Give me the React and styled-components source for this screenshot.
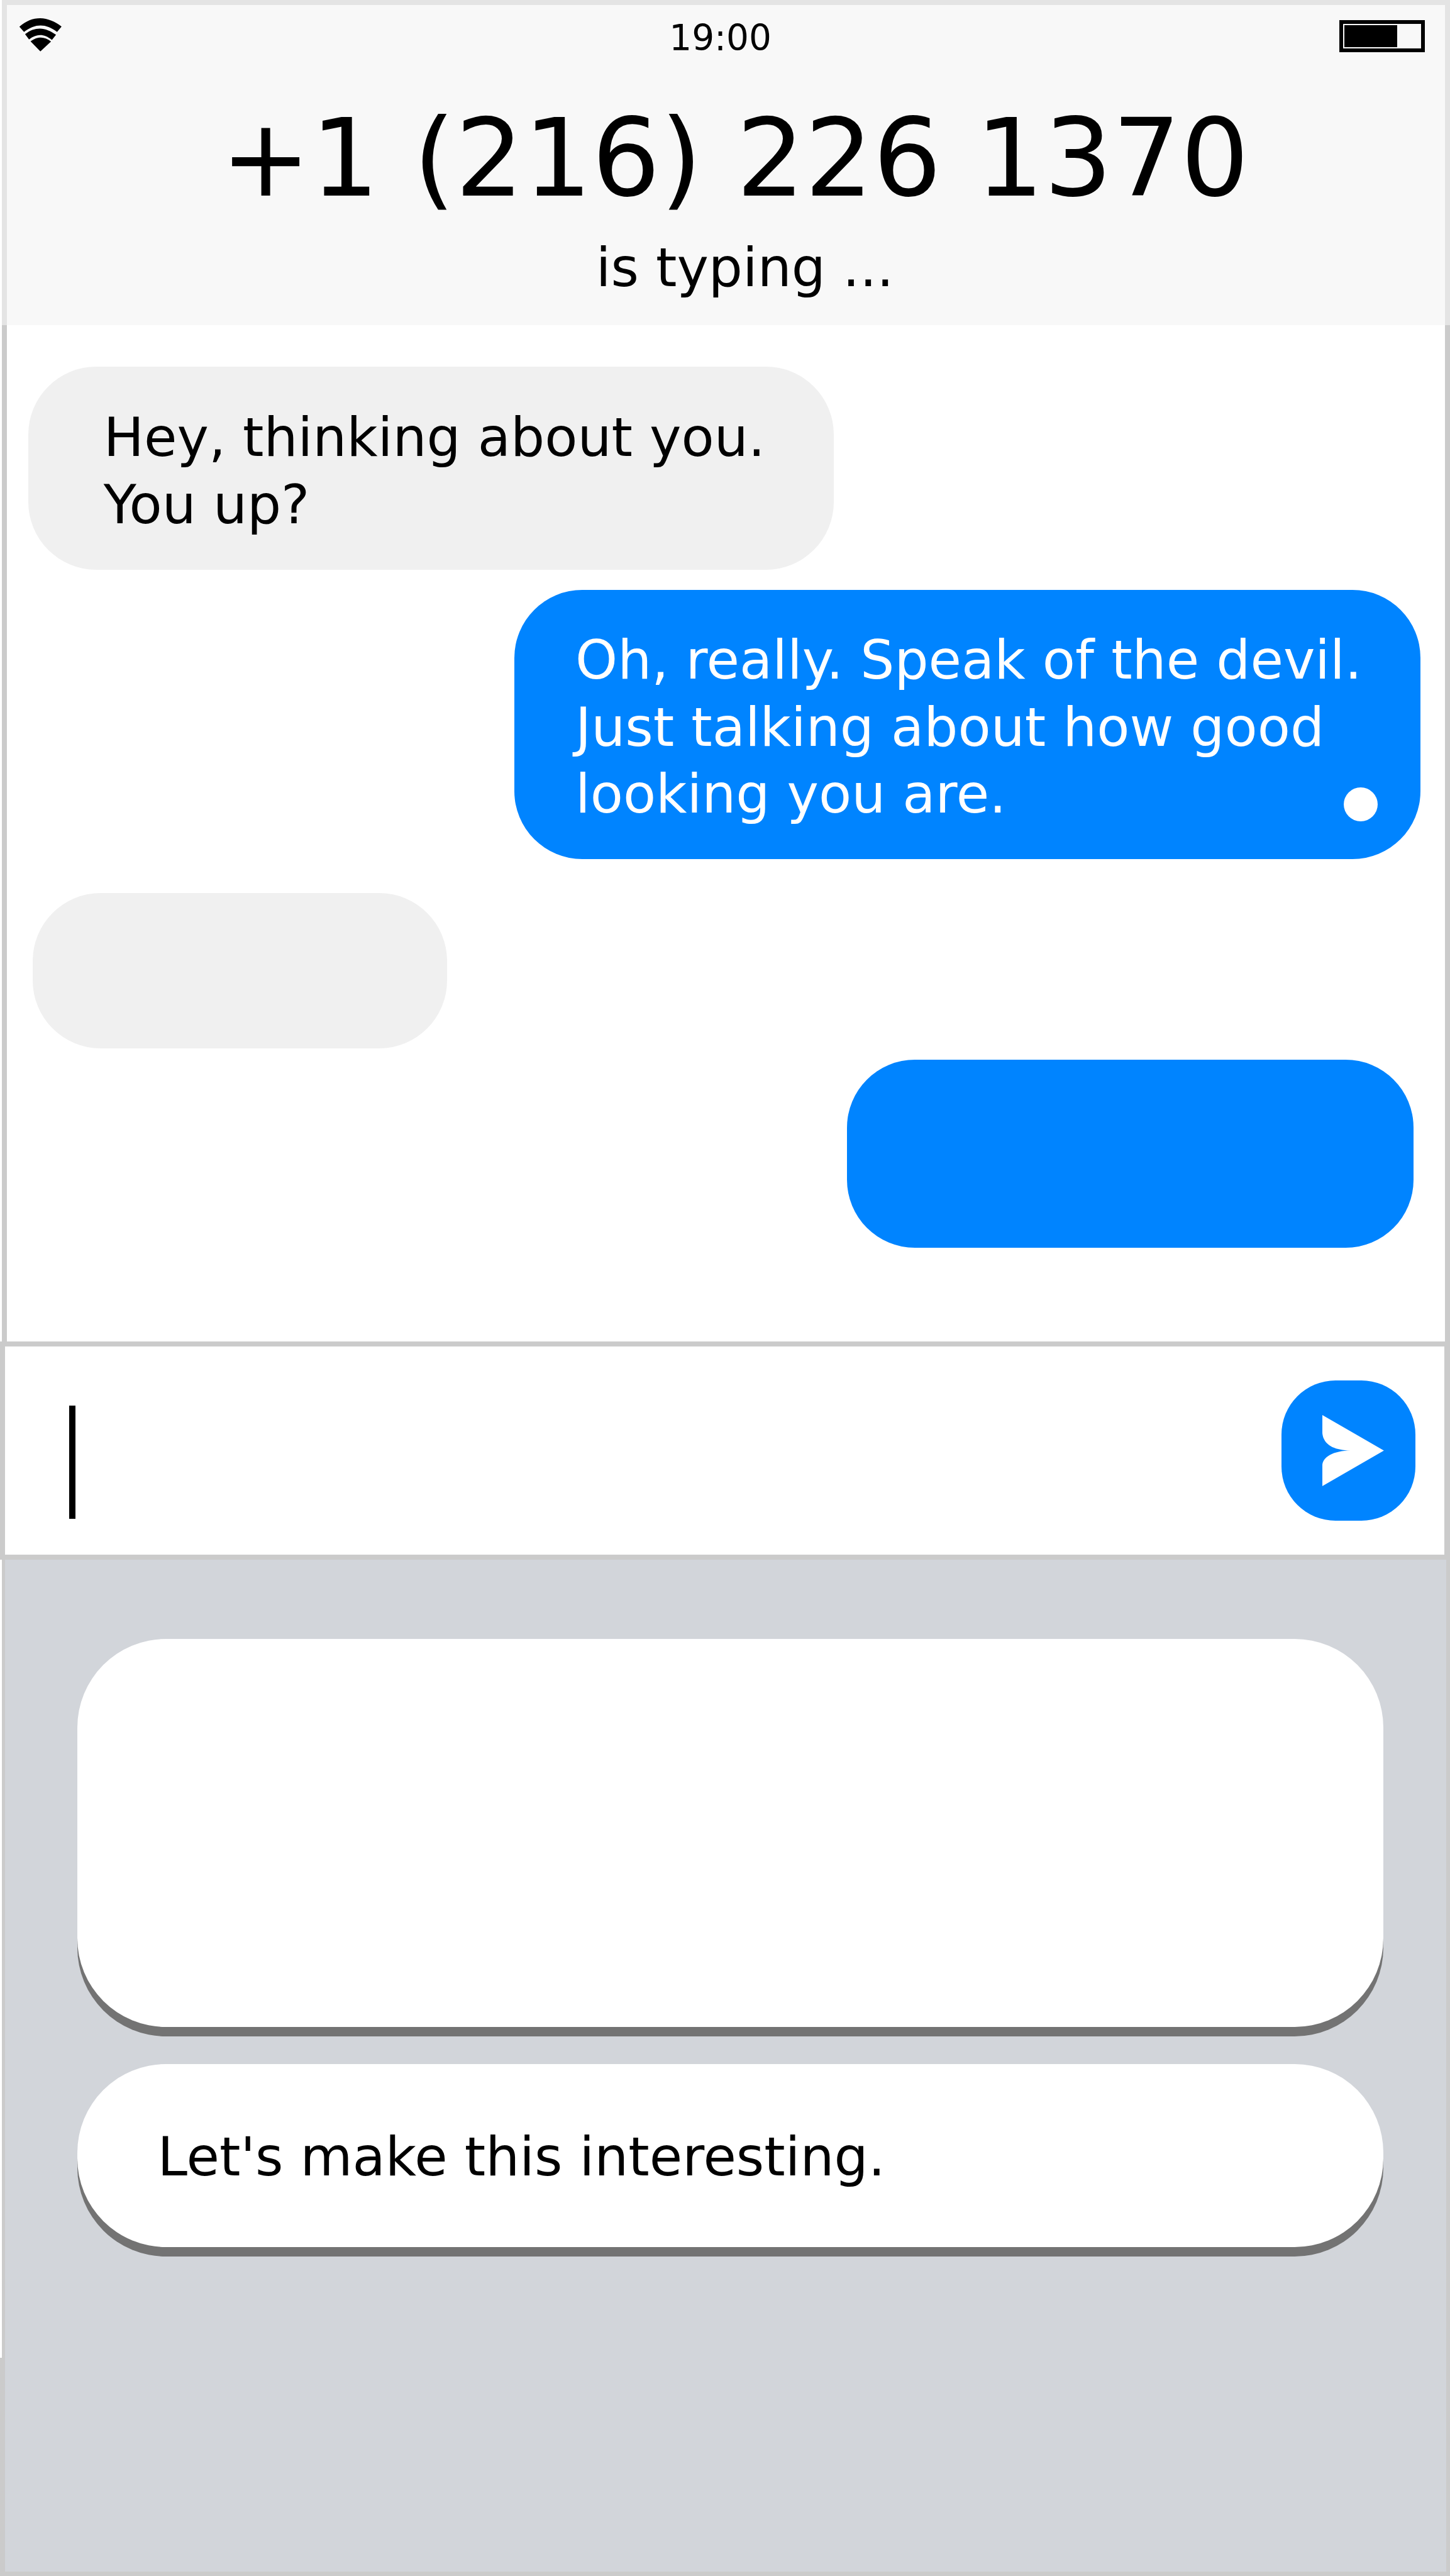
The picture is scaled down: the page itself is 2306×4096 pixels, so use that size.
import React from "react";
import styled, { createGlobalStyle } from "styled-components";

const GlobalStyle = createGlobalStyle`
  * { box-sizing: border-box; }
  html, body { margin: 0; padding: 0; background: #fff; }
  body { font-family: "DejaVu Sans", Verdana, sans-serif; color: #000; overflow: hidden; }
`;

const Screen = styled.main`
  width: 2306px;
  height: 4096px;
  display: flex;
  flex-direction: column;
  background: #fff;
  overflow: hidden;
  font-size: 85.3px;
  line-height: 106.65px;
  white-space: pre;
`;

const Header = styled.header`
  height: 517px;
  margin-left: 3px;
  border: solid #e4e4e4;
  border-width: 8px 8px 0 8px;
  background: #f8f8f8;
  display: flex;
  flex-direction: column;
`;

const StatusBar = styled.div`
  height: 112px;
  padding: 20px 32px 0 19px;
  display: grid;
  grid-template-columns: 1fr auto 1fr;
  align-items: start;
`;

const WifiIcon = styled.svg`
  display: block;
  width: 69px;
  height: 54px;
`;

const Clock = styled.time`
  font-size: 56.5px;
  line-height: 65px;
  margin-left: -4.8px;
`;

const Battery = styled.div`
  justify-self: end;
  width: 136px;
  height: 51px;
  margin-top: 4px;
  border: 6px solid #000;
  padding: 2px;
`;

const Charge = styled.div`
  width: 84px;
  height: 100%;
  background: #000;
`;

const Contact = styled.h1`
  margin: 32px 0 0 340px;
  font-size: 170.9px;
  font-weight: 400;
  line-height: 200px;
`;

const Typing = styled.p`
  margin: 20.8px 0 0 936.7px;
`;

const Conversation = styled.section`
  height: 1616px;
  margin-left: 3px;
  border: solid #cbcbcb;
  border-width: 0 8px;
  padding: 65.7px 39px 0 33.6px;
  display: flex;
  flex-direction: column;
`;

const Bubble = styled.div`
  flex: none;
  align-self: ${(p) => (p.$mine ? "flex-end" : "flex-start")};
  width: ${(p) => p.$width}px;
  height: ${(p) => p.$height}px;
  margin: ${(p) => p.$margin || "0"};
  padding: ${(p) => p.$padding || "0"};
  border-radius: 108px;
  background: ${(p) => (p.$mine ? "#0084ff" : "#f0f0f0")};
  color: ${(p) => (p.$mine ? "#fff" : "#000")};
  position: relative;
`;

const StatusDot = styled.span`
  position: absolute;
  right: 68.5px;
  bottom: 60.7px;
  width: 54px;
  height: 54px;
  border-radius: 50%;
  background: #fff;
`;

const Composer = styled.section`
  height: 347px;
  border: solid #cbcbcb;
  border-width: 8px 9px 8px 8px;
  padding: 54px 46px 0 102px;
  display: flex;
  justify-content: space-between;
  align-items: flex-start;
`;

const Caret = styled.span`
  width: 10px;
  height: 180px;
  margin-top: 40px;
  background: #000;
`;

const SendButton = styled.button`
  width: 213px;
  height: 223px;
  padding: 0;
  border: 0;
  border-radius: 86px;
  background: #0084ff;
`;

const SendIcon = styled.svg`
  display: block;
  width: 98px;
  height: 113px;
  margin: 0 0 0 65px;
`;

const KeyboardRow = styled.section`
  flex: 1;
  display: flex;
`;

const Gutter = styled.div`
  width: 3px;
  padding-top: 1268.5px;

  &::after {
    content: "";
    display: block;
    height: 100%;
    background: #cbcbcb;
  }
`;

const Keyboard = styled.div`
  flex: 1;
  border: solid #cbcbcb;
  border-width: 0 6px 7px 5px;
  background: #d2d5da;
  padding: 125.6px 100px 0 115px;
  display: flex;
  flex-direction: column;
  gap: 59.4px;
`;

const Suggestion = styled.div`
  flex: none;
  height: ${(p) => p.$height}px;
  padding: 95.1px 127.5px 0;
  border-radius: 141px;
  background: #fff;
  box-shadow: 0 15px 0 #737373;
`;

export default function App() {
  return (
    <>
      <GlobalStyle />
      <Screen>
        <Header>
          <StatusBar>
            <WifiIcon viewBox="54 50 126 99" preserveAspectRatio="none">
              <path d="M55.5 76.5C75 60 94 52 116 52C138 52 159 62 178 76L165 91.5C148 79 133 73 117 73C101 73 86 79 69 91.5Z" />
              <path d="M72 98C87 87 100 82 115 82C131 82 146 89 162 100L150 115C137 105 127 101 116 101C105 101 95 105 83.5 113.5Z" />
              <path d="M88 119C99 111 108 108 118 108C128 108 137 112 147.5 119.5L116.5 148.5Z" />
            </WifiIcon>
            <Clock>19:00</Clock>
            <Battery>
              <Charge />
            </Battery>
          </StatusBar>
          <Contact>+1 (216) 226 1370</Contact>
          <Typing>is typing ...</Typing>
        </Header>

        <Conversation>
          <Bubble $width={1281.8} $height={323.3} $padding="60.8px 0 0 120.2px">
            {"Hey, thinking about you.\nYou up?"}
          </Bubble>
          <Bubble
            $mine
            $width={1441}
            $height={428}
            $margin="32.4px 0 0"
            $padding="58.5px 0 0 97px"
          >
            {"Oh, really. Speak of the devil.\nJust talking about how good\nlooking you are."}
            <StatusDot />
          </Bubble>
          <Bubble $width={658.8} $height={246.6} $margin="54px 0 0 7.2px" />
          <Bubble $mine $width={900.8} $height={299.8} $margin="17.6px 11.2px 0 0" />
        </Conversation>

        <Composer>
          <Caret />
          <SendButton aria-label="Send">
            <SendIcon viewBox="3835.3 4102 178.5 206.2" preserveAspectRatio="none">
              <path
                fill="#fff"
                d="M3835.3 4102L4013.6 4205L3835.3 4308.2V4249C3835.5 4224 3866 4206 3917 4204.8C3862 4204 3835 4184 3835 4148Z"
              />
            </SendIcon>
          </SendButton>
        </Composer>

        <KeyboardRow>
          <Gutter />
          <Keyboard>
            <Suggestion $height={617} />
            <Suggestion $height={291}>Let's make this interesting.</Suggestion>
          </Keyboard>
        </KeyboardRow>
      </Screen>
    </>
  );
}
